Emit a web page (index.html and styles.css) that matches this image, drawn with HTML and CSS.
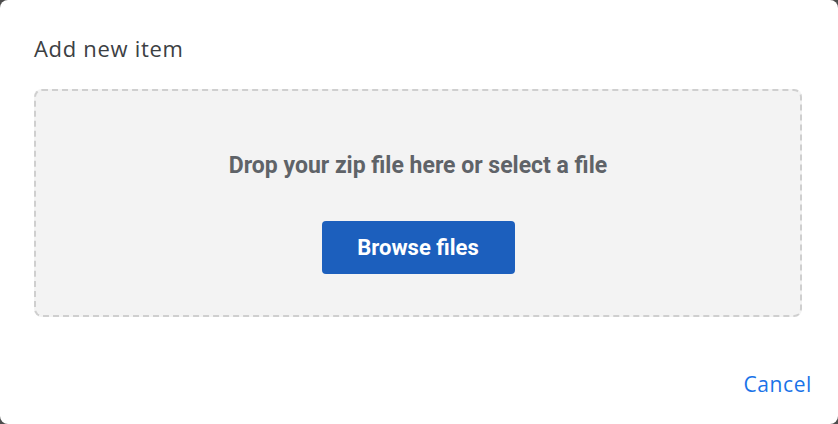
FILE: index.html
```html
<!DOCTYPE html>
<html lang="en">
<head>
<meta charset="utf-8">
<title>Add new item</title>
<link rel="stylesheet" href="styles.css">
</head>
<body>
<div class="dialog">
  <h1 class="title">Add new item</h1>
  <div class="dropzone">
    <p class="drop-text">Drop your zip file here or select a file</p>
    <button class="browse" type="button">Browse files</button>
  </div>
  <div class="actions">
    <button class="cancel" type="button">Cancel</button>
  </div>
</div>
</body>
</html>
```

FILE: styles.css
```css
html, body {
  margin: 0;
  padding: 0;
  height: 100%;
  background: #4d4d4d;
}
.dialog {
  box-sizing: border-box;
  height: 424px;
  width: 838px;
  background: #ffffff;
  border-radius: 8px;
  padding: 34px 36px 0 34px;
  display: flex;
  flex-direction: column;
  font-family: Roboto, "Open Sans", sans-serif;
}
.title {
  margin: 0;
  font-family: "Open Sans", Roboto, sans-serif;
  font-weight: 500;
  font-size: 22px;
  letter-spacing: 0.7px;
  line-height: 28px;
  color: #3c4043;
}
.dropzone {
  box-sizing: border-box;
  margin-top: 27px;
  height: 228px;
  background: #f3f3f3;
  border: 2px dashed #cfcfcf;
  border-radius: 8px;
  display: flex;
  flex-direction: column;
  align-items: center;
  padding-top: 60px;
}
.drop-text {
  margin: 0;
  font-weight: 700;
  font-size: 23px;
  line-height: 30px;
  color: #5f6368;
}
.browse {
  margin-top: 40px;
  width: 193px;
  height: 53px;
  border: none;
  border-radius: 4px;
  background: #1c5fbd;
  color: #ffffff;
  font-family: Roboto, sans-serif;
  font-weight: 700;
  font-size: 22px;
  cursor: pointer;
}
.actions {
  display: flex;
  justify-content: flex-end;
  margin-top: 53px;
  margin-right: -10px;
}
.cancel {
  border: none;
  background: none;
  padding: 0;
  font-family: "Open Sans", Roboto, sans-serif;
  font-size: 21px;
  font-weight: 500;
  letter-spacing: 0.6px;
  color: #1a73e8;
  cursor: pointer;
}
```
